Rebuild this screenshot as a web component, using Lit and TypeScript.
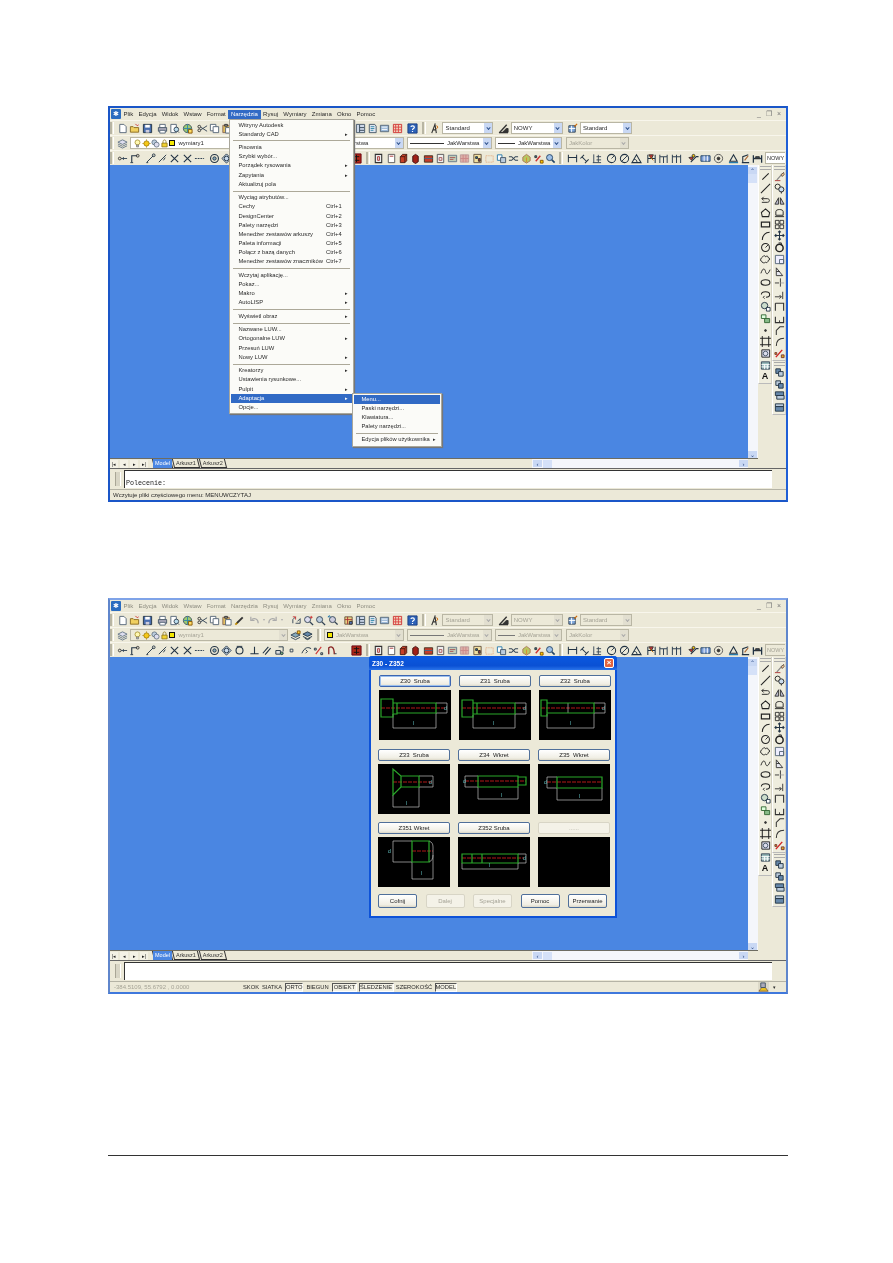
import { LitElement, html, css, svg, nothing, TemplateResult } from "lit";
import { customElement, property } from "lit/decorators.js";

const ICONS: Record<string, TemplateResult> = {
  doc: svg`<path d="M3 1.5h4.5L10 4v6.5H3z" fill="#fff" stroke="#567"/>`,
  folder: svg`<path d="M1.5 10V4h3l1 1h5v5z" fill="#f0d060" stroke="#8a6a20"/><path d="M7 1l2 2 1.500-1" stroke="#c33"/>`,
  save: svg`<path d="M1.500 1.500h9v9h-9z" fill="#4a6fb0" stroke="#234"/><path d="M3.500 2h5v3h-5z" fill="#fff" stroke="none"/><path d="M4 7.500h4v3H4z" fill="#ccd" stroke="none"/>`,
  print: svg`<path d="M3 5V1.500h6V5" fill="#fff" stroke="#567"/><path d="M1.500 5h9v4h-9z" fill="#aab" stroke="#456"/><path d="M3 8h6v3H3z" fill="#fff" stroke="#567"/>`,
  preview: svg`<path d="M2 1.500h6v9H2z" fill="#fff" stroke="#567"/><circle cx="8" cy="7" r="2.500" fill="#bde" stroke="#345"/><path d="m9.500 9 1.500 1.500" stroke="#345"/>`,
  plot: svg`<circle cx="6" cy="6" r="4.500" fill="#9ecb70" stroke="#456"/><path d="M2 6h8M6 1.500v9" stroke="#38a"/><path d="M7 7h4v4H7z" fill="#fd6" stroke="#850"/>`,
  cut: svg`<circle cx="2.500" cy="8" r="1.500"/><circle cx="2.500" cy="4" r="1.500"/><path d="M4 7.500 11 3M4 4.500 11 9" stroke="#345"/>`,
  copy: svg`<path d="M1.500 1.500h6v7h-6z" fill="#fff" stroke="#567"/><path d="M4.500 4h6v6.500h-6z" fill="#fff" stroke="#567"/>`,
  paste: svg`<path d="M2 2.500h7v8H2z" fill="#e4c060" stroke="#865"/><path d="M5 5h6v6H5z" fill="#fff" stroke="#567"/><path d="M4 1.500h3v2H4z" fill="#999"/>`,
  brush: svg`<path d="m3 9 6.500-6.500" stroke="#333" stroke-width="2"/><path d="m1.500 10.500 2-2" stroke="#b80" stroke-width="2"/>`,
  undo: svg`<path d="M10 9C10 4 6 3 3 5M2 2v4h4" stroke="#aaa" stroke-width="1.300"/>`,
  redo: svg`<path d="M2 9c0-5 4-6 7-4M10 2v4H6" stroke="#aaa" stroke-width="1.300"/>`,
  pan: svg`<path d="M2 9V5l3-3M5 9h5V4L7 7" stroke="#345"/><path d="M2 2h3v3" stroke="#c33"/>`,
  zoomrt: svg`<circle cx="5" cy="5" r="3.300" fill="#dde" stroke="#345"/><path d="m7.500 7.500 3.500 3.500" stroke="#345" stroke-width="1.500"/><path d="M9 1v3M7.500 2.500h3" stroke="#c33"/>`,
  zoomwin: svg`<circle cx="5" cy="5" r="3.300" fill="#bcd" stroke="#345"/><path d="m7.500 7.500 3.500 3.500" stroke="#345" stroke-width="1.500"/>`,
  zoomprev: svg`<circle cx="6" cy="5" r="3.300" fill="#ccd" stroke="#345"/><path d="m8.500 7.500 3 3" stroke="#345" stroke-width="1.500"/><path d="M1 2h3M1 2l2-1.500" stroke="#27a"/>`,
  props: svg`<path d="M2 2h8v8H2z" fill="#ead080" stroke="#654"/><path d="M2 5h8M5 2v8" stroke="#a33"/><path d="M7 7h3v3H7z" fill="#57b"/>`,
  dc: svg`<path d="M1.500 1.500h9v9h-9z" fill="#cdd8ea" stroke="#456"/><path d="M5 2v8M5 5h5M5 8h5" stroke="#345"/>`,
  pal: svg`<path d="M2.500 1.500h6l1.500 2v7h-7.500z" fill="#dfe6f0" stroke="#456"/><path d="M4 4h4M4 6h4M4 8h3" stroke="#38a"/>`,
  sheet: svg`<path d="M1.500 2.500h9v7h-9z" fill="#9bb8d8" stroke="#567"/><path d="M3 4.500h6M3 7h6" stroke="#fff"/>`,
  markup: svg`<path d="M1.500 1.500h9v9h-9z" fill="#f0d8c0" stroke="#c33"/><path d="M4 1.500v9M7 1.500v9M1.500 4.500h9M1.500 7.500h9" stroke="#d44"/>`,
  help: svg`<path d="M1 1h10v10H1z" fill="#2d62b8" stroke="#1a3d80"/><path d="M4.200 4.300C4.500 2.600 8 2.700 8 4.500 8 6 6 6 6 7.500M6 8.700v1.200" stroke="#fff" stroke-width="1.300"/>`,
  textstyle: svg`<path d="M3 11 6.500 1.500 8 11M4 7.500h4" stroke="#333" stroke-width="1.200"/><path d="M8 3c2 0 2 3 0 3" stroke="#c60"/>`,
  dimstyle: svg`<path d="M1 10.500h10" stroke="#333" stroke-width="1.500"/><path d="M2 10 9.500 2" stroke="#333" stroke-width="1.500"/><path d="M5 10 9 6h2v4z" fill="#333"/>`,
  tablestyle: svg`<path d="M2 3h7v7H2z" fill="#7fa8dc" stroke="#345"/><path d="M2 6h7M5 3v7" stroke="#fff"/><path d="m8 4 3-3" stroke="#c60" stroke-width="1.300"/>`,
  layers: svg`<path d="m6 2 5 2.500L6 7 1 4.500z" fill="#dde" stroke="#678"/><path d="m1 6.500 5 2.500 5-2.500" stroke="#678"/><path d="m1 8.500 5 2.500 5-2.500" stroke="#678"/>`,
  bulb: svg`<circle cx="6" cy="4.500" r="3.300" fill="#fff8b0" stroke="#a08820"/><path d="M4.700 8h2.600v2.500H4.700z" fill="#bbb" stroke="#777"/>`,
  sun: svg`<circle cx="6" cy="6" r="3.500" fill="#f5c818" stroke="#9a7400"/><path d="M6 .5v2M6 9.500v2M.5 6h2M9.500 6h2" stroke="#b08a10"/>`,
  stack: svg`<circle cx="4.500" cy="4.500" r="3.300" fill="#bcd" stroke="#567"/><circle cx="7.500" cy="7.500" r="3.300" fill="#dde" stroke="#567"/>`,
  lock: svg`<path d="M2.500 5.500h7v5h-7z" fill="#f2d230" stroke="#8a7010"/><path d="M4 5.500V3.500c0-3 4-3 4 0v2" stroke="#8a7010"/>`,
  layerprev: svg`<path d="m6 3 5 2.500L6 8 1 5.500z" fill="#8ab" stroke="#345"/><path d="m1 8 5 2.500L11 8" stroke="#345"/><path d="M8 1h3v3H8z" fill="#fc3" stroke="#850"/>`,
  layerstate: svg`<path d="m6 2 5 2.500L6 7 1 4.500z" fill="#68a" stroke="#234"/><path d="m1 7 5 2.500L11 7" stroke="#234"/><path d="m3 9 3 1.500L9 9" stroke="#234"/>`,
  node: svg`<circle cx="3" cy="6" r="1.500"/><path d="M4.500 6H11" stroke="#345"/><path d="M7 4.500v3" stroke="#345"/>`,
  corner: svg`<path d="M3 10V3h6" stroke="#234" stroke-width="1.200"/><circle cx="9.500" cy="3" r="1.500"/><path d="M1.500 10.500h3" stroke="#234"/>`,
  end: svg`<path d="m2 10 7-7" stroke="#234"/><circle cx="9.500" cy="2.500" r="1.500" stroke="#234"/><path d="M1.500 10.500h2" stroke="#234"/>`,
  mid: svg`<path d="m2 10 8-8" stroke="#234"/><path d="m7 8 2-3" stroke="#234"/>`,
  cross: svg`<path d="m2 2 8 8M10 2 2 10" stroke="#234" stroke-width="1.200"/>`,
  dash: svg`<path d="M1 6h10" stroke="#345" stroke-width="1.200" stroke-dasharray="2 1"/>`,
  center: svg`<circle cx="6" cy="6" r="4.300" stroke="#234" stroke-width="1.200"/><circle cx="6" cy="6" r="1.800" fill="#8ab" stroke="#234"/>`,
  quad: svg`<path d="m6 1 5 5-5 5-5-5z" fill="#cde" stroke="#234"/><circle cx="6" cy="6" r="2.500" stroke="#234"/>`,
  tan: svg`<circle cx="6" cy="6" r="3.800" stroke="#234" stroke-width="1.200"/><path d="M3 1.500h6" stroke="#234"/>`,
  perp: svg`<path d="M1.500 9.500h9M6 2v7.500" stroke="#234" stroke-width="1.200"/>`,
  par: svg`<path d="m2 9 6-7M4.500 10.500l6-7" stroke="#234" stroke-width="1.200"/>`,
  insert: svg`<path d="M2 6h5v4H2z" fill="#ddd" stroke="#234"/><path d="M5 2h5v5" stroke="#234"/><circle cx="8.500" cy="9" r="1.500" fill="#7a7" stroke="#234"/>`,
  pt: svg`<path d="M4.500 4.500h3v3h-3z" stroke="#345"/>`,
  near: svg`<path d="M1 9C4 2 8 2 11 4" stroke="#234"/><path d="m5 5 2 2-2 2" stroke="#234"/>`,
  osnapr: svg`<path d="m3 10 6-8" stroke="#c33" stroke-width="1.200"/><path d="M1.500 3.500h2v2h-2zM8.500 8.500h2v2h-2z" stroke="#234"/>`,
  osnaps: svg`<path d="M3 10V3c3-2 6-1 6 7" stroke="#822" stroke-width="1.400"/><path d="M9.500 9.500h2" stroke="#234"/>`,
  redbox: svg`<path d="M1 1h10v10H1z" fill="#b02818" stroke="#601"/><path d="M3 4h6M6 2v8M3 8h6" stroke="#111"/>`,
  ucs: svg`<path d="M2.500 1.500h7v9h-7z" fill="#eee" stroke="#333" stroke-width="1.200"/><path d="M5 4h2v4H5z" stroke="#a33"/>`,
  ucs2: svg`<path d="M2.500 1.500h7v9h-7z" fill="#fff" stroke="#555"/><path d="M4 3.500h4" stroke="#a33"/>`,
  solid: svg`<path d="M2.500 4 5 1.500h4.500v7L7.500 10.500H2.500z" fill="#c64028" stroke="#4a1a10"/><path d="M2.500 4h5v6.500M7.500 4l2-2.500" stroke="#4a1a10"/>`,
  solid2: svg`<path d="M3 3.500 6 1.500l3 2v6l-3 2-3-2z" fill="#a02018" stroke="#401010"/>`,
  solid3: svg`<path d="M1.500 3h9v7h-9z" fill="#c43c2c" stroke="#432"/><path d="M1.500 6h9" stroke="#468"/>`,
  frame: svg`<path d="M2.500 1.500h7v9h-7z" fill="#eee" stroke="#555"/><path d="M4.500 5h3v3h-3z" stroke="#a55"/>`,
  img: svg`<path d="M1.500 2.500h9v7h-9z" fill="#c0cdb8" stroke="#678"/><path d="M3 5h6M3 7h4" stroke="#a55"/>`,
  pink: svg`<path d="M1.500 2h9v8h-9z" fill="#ddb0a8" stroke="#b99"/><path d="M4.500 2v8M7.500 2v8M1.500 6h9" stroke="#c88"/>`,
  multi: svg`<path d="M2 1.500h8v9H2z" fill="#f2e0a0" stroke="#654"/><path d="M4 4h2v2H4z" fill="#27a"/><path d="M7 6h2v3H7z" fill="#a33"/>`,
  dotted: svg`<path d="M2 3h8v7H2z" stroke="#e0a070" stroke-dasharray="1 1"/>`,
  bluedoc: svg`<path d="M1.500 2h5v6h-5z" fill="#fff" stroke="#27a"/><path d="M5 5h5.500v5.500H5z" fill="#bcd" stroke="#456"/>`,
  scissor: svg`<path d="M1 4h3l2 2 2-2h3M1 8h3l2-2 2 2h3" stroke="#345" stroke-width="1.100"/>`,
  wheel: svg`<path d="m6 1.500 4 3v4l-4 2.500-4-2.500v-4z" fill="#b8c860" stroke="#a75"/><path d="M6 5v5" stroke="#d83"/>`,
  pencil: svg`<path d="m3 9 5-6" stroke="#c33" stroke-width="1.500"/><path d="M8 8h3v3H8z" fill="#fc0" stroke="#850"/><path d="M2 3h2v2H2z" fill="#38a"/>`,
  locate: svg`<circle cx="5" cy="5" r="3.300" fill="#9ec0e8" stroke="#246"/><path d="m7.500 7.500 3 3" stroke="#246" stroke-width="1.800"/>`,
  dimh: svg`<path d="M1.500 2v8M10.500 2v8M1.500 5h9" stroke="#234" stroke-width="1.100"/>`,
  dima: svg`<path d="m1.500 6 4-4M6.500 11l4-4M3 4l5 5" stroke="#234" stroke-width="1.100"/>`,
  dimo: svg`<path d="M2 10.500h9M3 1.500v9M6 4h5M6 7.500h5M8 2v8" stroke="#345"/>`,
  dimr: svg`<circle cx="6" cy="6" r="4.500" stroke="#234" stroke-width="1.100"/><path d="m6 6 3-3" stroke="#234"/>`,
  dimd: svg`<circle cx="6" cy="6" r="4.500" stroke="#234" stroke-width="1.100"/><path d="m3 9 6-6" stroke="#234"/>`,
  dimang: svg`<path d="M1 10.500h10L6 2z" stroke="#234" stroke-width="1.100"/><path d="M3.500 7c2 0 3 1 3 3" stroke="#234"/>`,
  dimq: svg`<path d="M2 2v9M10 2v9M2 6h8" stroke="#234" stroke-width="1.100"/><path d="M3 2h5l-2 4z" fill="#c33"/><path d="m4 4 4 4" stroke="#b60"/>`,
  dimb: svg`<path d="M2 2v9M10 2v9M2 4h8M6 4v7" stroke="#345" stroke-width="1.100"/>`,
  dimc: svg`<path d="M1.500 2v9M6 2v9M10.500 2v9M1.500 4h9" stroke="#345" stroke-width="1.100"/>`,
  leader: svg`<path d="m3 10 6-6h2.500" stroke="#234" stroke-width="1.200"/><path d="m1 5 3 3 2-4z" fill="#c33"/><circle cx="6" cy="3" r="1.500" fill="#fc0"/>`,
  tol: svg`<path d="M1 3h10v6H1z" fill="#7fa0d8" stroke="#246"/><path d="M4.500 3v6M8 3v6" stroke="#fff"/>`,
  cmark: svg`<circle cx="6" cy="6" r="4.500" stroke="#555"/><circle cx="6" cy="6" r="1.500" fill="#333"/>`,
  dedit: svg`<path d="m6 2 4 7H2z" stroke="#234" stroke-width="1.200"/><path d="M1 10.500h10" stroke="#27a" stroke-width="1.300"/>`,
  dedit2: svg`<path d="M2 10.500h8M3 10V4l6-2" stroke="#234" stroke-width="1.200"/><path d="m9 3-4 5" stroke="#a63" stroke-width="1.300"/>`,
  dupd: svg`<path d="M1.500 2.500v8M10.500 2.500v8M1.500 6h9" stroke="#234" stroke-width="1.400"/><path d="M4 4h4v2H4z" fill="#345"/>`,
  line: svg`<path d="m2.500 9.500 7-7" stroke="#222" stroke-width="1.100"/>`,
  xline: svg`<path d="m1 11 10-10" stroke="#222" stroke-width="1.100"/>`,
  pline: svg`<path d="M2 4h6c3 0 3 4 0 4H2" stroke="#222"/><path d="m4 2-2 2 2 2" stroke="#222"/>`,
  polygon: svg`<path d="m6 2 4.500 4-1 4.500h-7L1.500 6z" stroke="#222" stroke-width="1.100"/>`,
  rect: svg`<path d="M1.500 3.500h9v5h-9z" stroke="#222" stroke-width="1.300"/>`,
  arc: svg`<path d="M2.500 11C2.500 6 6 2.500 10.500 2.500" stroke="#222" stroke-width="1.100"/>`,
  circle: svg`<circle cx="6" cy="6" r="4.300" stroke="#222" stroke-width="1.100"/><path d="m6 6 3-3" stroke="#222"/>`,
  cloud: svg`<path d="M3 3c1-2 3-1 3 0 1-1 3-1 3 1 2 0 2 3 0 3 0 2-2 3-3 2-1 1-4 1-4-1-2 0-2-3 1-5z" stroke="#222"/>`,
  spline: svg`<path d="M1 8c2-6 4-6 5-2s3 3 5-2" stroke="#222"/>`,
  ellipse: svg`<ellipse cx="6" cy="6" rx="4.800" ry="3" stroke="#222" stroke-width="1.200"/>`,
  earc: svg`<path d="M1.500 6c0-4 9-4 9 0 0 2-2 3-4 3" stroke="#222" stroke-width="1.100"/><path d="M5 7.500 3.500 9l1.500 1.500" stroke="#222"/>`,
  block: svg`<circle cx="5" cy="5" r="3.500" fill="#cdc" stroke="#234"/><path d="M7 7h4v4H7z" fill="#fff" stroke="#234"/>`,
  mkblock: svg`<path d="M1.500 2h5v4h-5z" fill="#dfd" stroke="#363"/><path d="M5 6h5.500v4.500H5z" fill="#8b8" stroke="#363"/>`,
  dot: svg`<circle cx="6" cy="6" r="1" fill="#333"/>`,
  hatch: svg`<path d="M2.500 2.500h7v7h-7z" stroke="#222" stroke-width="1.100"/><path d="M0 2.500h2.500M9.500 2.500H12M0 9.500h2.500M9.500 9.500H12M2.500 0v2.500M9.500 0v2.500M2.500 9.500V12M9.500 9.500V12" stroke="#222"/>`,
  region: svg`<path d="M2 2h8.500v8H2z" fill="#dde" stroke="#222"/><circle cx="6" cy="6" r="2.500" stroke="#456"/>`,
  table: svg`<path d="M1.500 2h9v8h-9z" fill="#9bb" stroke="#345"/><path d="M1.500 5h9M1.500 7.500h9M5 5v5M8 5v5" stroke="#fff"/>`,
  erase: svg`<path d="m3 10 6-7" stroke="#888" stroke-width="1.300"/><path d="M8 4 10.500 1.500 11 4l-2 2z" fill="#f0c8a0" stroke="#654"/><path d="M1 10.500h6" stroke="#a33"/>`,
  copyobj: svg`<circle cx="4" cy="4" r="2.800" stroke="#222"/><circle cx="8" cy="7" r="2.800" fill="#cde" stroke="#222"/><path d="M8 9.500v2" stroke="#222"/>`,
  mirror: svg`<path d="M1 10 5 3v7zM11 10 7 3v7z" fill="#bbc" stroke="#333"/>`,
  offset: svg`<path d="M2 9V5c0-3 8-3 8 0v4z" stroke="#222"/><path d="M1 10.500h10" stroke="#222"/>`,
  array: svg`<path d="M1.500 1.500h4v4h-4zM6.500 1.500h4v4h-4zM1.500 6.500h4v4h-4zM6.500 6.500h4v4h-4z" stroke="#333"/>`,
  move: svg`<path d="M6 1v10M1 6h10M4.500 2.500 6 1l1.500 1.500M4.500 9.500 6 11l1.500-1.500M2.500 4.500 1 6l1.500 1.500M9.500 4.500 11 6 9.500 7.500" stroke="#234" stroke-width="1.100"/>`,
  rotate: svg`<circle cx="6" cy="6.500" r="4" stroke="#222" stroke-width="1.600"/><path d="M5 1h3v3" stroke="#222"/>`,
  scale: svg`<path d="M1.500 1.500h9v9h-9z" fill="#eef" stroke="#567"/><path d="M6 6h4.500v4.500H6z" stroke="#567"/>`,
  stretch: svg`<path d="M2.500 10.500V2l7 8.500z" fill="#e8e8f0" stroke="#333"/><path d="M2.500 6h4" stroke="#333"/>`,
  trim: svg`<path d="M1 6.500h4.500" stroke="#333"/><path d="M7 1.500v9" stroke="#333"/><path d="M7 6.500h4" stroke="#aaa"/>`,
  extend: svg`<path d="M1 8.500h7M9.500 3v8" stroke="#333"/><path d="m6 6.500 2 2-2 2" stroke="#333"/>`,
  brk: svg`<path d="M1.500 2.500h9v8M1.500 2.500v8" stroke="#333" stroke-width="1.200"/>`,
  join: svg`<path d="M1.500 4v6.500h9V4" stroke="#333" stroke-width="1.200"/><path d="M6 10.500V8" stroke="#333"/>`,
  chamfer: svg`<path d="M2.500 11V6l4-4H11" stroke="#333" stroke-width="1.100"/>`,
  fillet: svg`<path d="M2.500 11C2.500 5 5 2.500 11 2.500" stroke="#333" stroke-width="1.100"/>`,
  explode: svg`<path d="m2 10 7-8" stroke="#d02020" stroke-width="1.500"/><path d="M1 5h2v2H1zM8 7.500h3v3H8z" fill="#e0b020" stroke="#733"/>`,
  ord1: svg`<path d="M2 2h5v5H2z" fill="#68a" stroke="#234"/><path d="M5 5h5v5H5z" fill="#bcd" stroke="#234"/>`,
  ord2: svg`<path d="M2 2h5v5H2z" fill="#bcd" stroke="#234"/><path d="M5 5h5v5H5z" fill="#68a" stroke="#234"/>`,
  ord3: svg`<path d="M1.500 2h9v4h-9z" fill="#68a" stroke="#234"/><path d="M3 6h8v4H3z" fill="#bcd" stroke="#234"/>`,
  ord4: svg`<path d="M1.500 2h9v3h-9z" fill="#bcd" stroke="#234"/><path d="M1.500 5h9v5h-9z" fill="#68a" stroke="#234"/>`,
  tray: svg`<path d="M1 10h10L8 6H4z" fill="#e8c020" stroke="#864"/><path d="M3 1h5v5H3z" fill="#aab" stroke="#456"/>`,
};

const icon = (name: string) =>
  html`<svg class="ic" viewBox="0 0 12 12" fill="none" stroke="#333" stroke-width="1">${ICONS[name]}</svg>`;

type Combo = { w: number; text?: string; line?: number; swatch?: boolean; icons?: string[]; dim?: boolean; bare?: boolean };
type Item = string | number | Combo;

const TB1: Item[] = ["grip", "doc", "folder", "save", 3, "print", "preview", "plot", 3, "cut", "copy", "paste", "brush", 3, "undo", "drop", "redo", "drop", 5, "pan", "zoomrt", "zoomwin", "zoomprev", 3, "props", "dc", "pal", "sheet", "markup", 3, "help", 3, "grip", "textstyle", 2, { w: 51, text: "Standard" }, 4, "dimstyle", 1, { w: 52, text: "NOWY" }, 4, "tablestyle", 1, { w: 52, text: "Standard" }];
const TB2: Item[] = ["grip", "layers", 1.7, { w: 158, text: "wymiary1", swatch: true, icons: ["bulb", "sun", "stack", "lock"] }, 1, "layerprev", "layerstate", 3.400, "grip", { w: 80, text: "JakWarstwa", swatch: true }, 3, { w: 85, text: "JakWarstwa", line: 34 }, 3, { w: 67, text: "JakWarstwa", line: 17 }, 4, { w: 63, text: "JakKolor", dim: true }];
const TB3: Item[] = ["grip", "node", "corner", 3, "end", "mid", "cross", "cross", "dash", 3, "center", "quad", "tan", 3, "perp", "par", "insert", "pt", 3, "near", "osnapr", "osnaps", 13, "redbox", 3.700, "grip", "ucs", "ucs2", "solid", "solid2", "solid3", "frame", "img", "pink", "multi", "dotted", "bluedoc", "scissor", "wheel", "pencil", "locate", 2.400, "grip", "dimh", "dima", "dimo", 3, "dimr", "dimd", "dimang", 3, "dimq", "dimb", "dimc", 5, "leader", "tol", "cmark", 3, "dedit", "dedit2", "dupd", 1, { w: 20, text: "NOWY", bare: true }];
const DRAW = ["line", "xline", "pline", "polygon", "rect", "arc", "circle", "cloud", "spline", "ellipse", "earc", "block", "mkblock", "dot", "hatch", "region", "table"];
const MODIFY = ["erase", "copyobj", "mirror", "offset", "array", "move", "rotate", "scale", "stretch", "trim", "extend", "brk", "join", "chamfer", "fillet", "explode"];
const ORDER = ["ord1", "ord2", "ord3", "ord4"];
const MENUS = ["Plik", "Edycja", "Widok", "Wstaw", "Format", "Narzędzia", "Rysuj", "Wymiary", "Zmiana", "Okno", "Pomoc"];
const STATUS = [["SKOK", 16, 0], ["SIATKA", 23, 0], ["ORTO", 18, 1], ["BIEGUN", 26, 0], ["OBIEKT", 25, 1], ["ŚLEDZENIE", 35, 1], ["SZEROKOŚĆ", 38, 0], ["MODEL", 22, 1]] as const;

@customElement("cad-window")
export class CadWindow extends LitElement {
  @property({ type: Boolean }) disabled = false;
  @property() active = "";
  @property() command = "";
  @property() status = "";

  static styles = css`
    :host { display: block; }
    .window {
      position: relative; width: 680px; height: 396px; box-sizing: border-box;
      display: flex; flex-direction: column; overflow: hidden;
      border: 2px solid #1a56c8; border-right-color: #1f5fd6; background: #ece9d8;
      font: 6px "Liberation Sans", Arial, sans-serif; color: #2a2a2a; filter: blur(0.3px);
    }
    .dis { border-top-color: #7fa3e8; border-left-color: #5f86cc; border-right-color: #5f86cc; border-bottom-color: #3f78dc; }
    .menubar { height: 12px; flex: none; display: flex; align-items: center; padding-left: 1px; }
    .logo { width: 10px; height: 10px; background: #2a6cc0; border-radius: 1px; display: flex; align-items: center; justify-content: center; color: #fff; font-size: 7px; }
    .mi { padding: 1.500px 2.600px; }
    .dis .mi { color: #8d8c80; }
    .mi.on { background: #316ac5; color: #fff; }
    .winbtns { margin-left: auto; padding-right: 5px; display: flex; gap: 5px; color: #777; font-size: 7px; }
    .tb { height: 15px; flex: none; display: flex; align-items: center; overflow: hidden; border-top: 1px solid #f8f6ec; box-sizing: border-box; }
    .ic { width: 11px; height: 11px; flex: none; margin: 0 .65px; display: block; }
    .grip { height: 12px; flex: none; box-sizing: border-box; border-left: 2px solid #b8b5a3; border-right: 1px solid #fff; margin: 0 2.500px 0 0; width: 4px; }
    .drop { flex: none; width: 6px; display: flex; justify-content: center; }
    .drop::after { content: ""; border: 1.500px solid transparent; border-top: 2px solid #aaa; border-bottom: 0; }
    .combo { height: 12px; flex: none; box-sizing: border-box; display: flex; align-items: center; background: #fff; border: 1px solid #b9b6a4; padding-left: 2px; overflow: hidden; white-space: nowrap; }
    .combo .label { flex: 1; overflow: hidden; }
    .combo .ic { width: 9px; height: 9px; margin: 0; }
    .combo.bare { padding-left: 1px; font-size: 5.500px; border-right: 0; }
    .swatch { width: 6px; height: 6px; flex: none; background: #f5e800; border: 1px solid #111; box-sizing: border-box; margin-right: 3px; }
    .ltline { height: 1px; background: #333; flex: none; margin-right: 3px; }
    .arrow { width: 8px; height: 10px; flex: none; background: #c9d8f4; display: flex; align-items: center; justify-content: center; }
    .arrow::after { content: ""; width: 2px; height: 2px; border: solid #33558f; border-width: 0 1px 1px 0; transform: rotate(45deg) translate(-.5px, -.5px); }
    .combo.off { background: #ece9d8; color: #a5a396; }
    .combo.off .arrow { background: #e2dfd0; }
    .combo.off .arrow::after { border-color: #aaa; }
    .combo.off .ltline { background: #777; }
    .middle { flex: 1; min-height: 0; display: flex; }
    .left { flex: 1; display: flex; flex-direction: column; min-width: 0; }
    .main { flex: 1; display: flex; min-height: 0; }
    .canvas { flex: 1; background: #4a86e2; }
    .vscroll { width: 10px; flex: none; background: #f4f6fb; display: flex; flex-direction: column; padding-top: 2px; box-sizing: border-box; }
    .sb { width: 9px; height: 7px; flex: none; background: #c9d8f4; color: #2b4a85; display: flex; align-items: center; justify-content: center; font-size: 6px; line-height: 1; }
    .vscroll .thumb { width: 9px; height: 9px; background: #d5e1f8; margin-bottom: auto; }
    .tabrow { height: 10px; flex: none; display: flex; align-items: center; border-top: 1px solid #6d6c62; box-sizing: border-box; }
    .navs { display: flex; gap: 2px; width: 43px; flex: none; box-sizing: border-box; }
    .nav { width: 8px; height: 8px; text-align: center; font-size: 5px; line-height: 8px; color: #222; background: #f4f2e6; }
    .tab { position: relative; padding: 0 3px; margin-right: 1px; height: 9px; line-height: 8px; color: #333; font-size: 5.500px; }
    .tab::before { content: ""; position: absolute; inset: 0; border: solid #333; border-width: 0 1px 1px; transform: skewX(14deg); z-index: -1; }
    .tab.on { color: #fff; background: #4a86e2; padding: 0 2px; }
    .tabs { display: flex; flex: 1; position: relative; z-index: 0; }
    .hscroll { width: 216px; height: 9px; flex: none; background: #f4f6fb; display: flex; align-items: center; padding-left: 1px; margin-right: 10px; box-sizing: border-box; }
    .hscroll .thumb { width: 9px; height: 8px; background: #d5e1f8; margin-right: auto; margin-left: 1px; }
    .rightbar { width: 28px; flex: none; display: flex; gap: 0; align-items: flex-start; }
    .vtb { width: 14px; flex: none; display: flex; flex-direction: column; align-items: center; background: #efedde; border-left: 1px solid #fff; border-bottom: 1px solid #bbb; border-right: 1px solid #d5d2c2; box-sizing: border-box; }
    .vgrip { width: 11px; height: 4px; flex: none; box-sizing: border-box; border-top: 1px solid #aaa; border-bottom: 1px solid #aaa; margin: 1px 0; }
    .vtb .ic { margin: .4px 0; }
    .atxt { height: 11.800px; font: bold 9px/11.800px "Liberation Sans", sans-serif; color: #111; }
    .cmd { height: 21px; flex: none; display: flex; align-items: stretch; border-top: 1px solid #666; box-sizing: border-box; padding: 1px 14px 1px 3px; }
    .cmdgrip { width: 4px; margin: 2px 3px 2px 2px; border-left: 1px solid #a9a696; border-right: 1px solid #fff; background: #d8d5c5; }
    .cmdbox { flex: 1; background: #fff; border: 1px solid #333; border-width: 1px 0 0 1px; display: flex; align-items: flex-end; padding-left: 1px; font: 6.700px/9px "Liberation Mono", monospace; color: #222; }
    .status { height: 11px; flex: none; display: flex; align-items: center; border-top: 1px solid #b5b3a5; box-sizing: border-box; padding-left: 3px; white-space: nowrap; }
    .coords { width: 129px; flex: none; color: #a5a396; padding-left: 1px; }
    .st { flex: none; text-align: center; font-size: 5.800px; margin-right: 1.500px; box-sizing: border-box; }
    .st.down { border: 1px solid #777; border-color: #555 #fff #fff #555; line-height: 7px; background: #f4f2e6; }
    .tray { margin-left: auto; display: flex; align-items: center; padding-right: 10px; gap: 3px; }
    .tray .ic { background: #dcd9c8; }
    .tray span { font-size: 5px; }
  `;

  private renderItem(it: Item) {
    if (typeof it === "number") return html`<div style="width:${it}px;flex:none"></div>`;
    if (it === "grip") return html`<div class="grip"></div>`;
    if (it === "drop") return html`<div class="drop"></div>`;
    if (typeof it === "string") return icon(it);
    const off = this.disabled || it.dim;
    return html`<div class="combo ${off ? "off" : ""} ${it.bare ? "bare" : ""}" style="width:${it.w}px">
      ${it.icons ? it.icons.map(icon) : nothing}
      ${it.swatch ? html`<div class="swatch"></div>` : nothing}
      ${it.line ? html`<div class="ltline" style="width:${it.line}px"></div>` : nothing}
      <span class="label">${it.text}</span>
      ${it.bare ? nothing : html`<div class="arrow"></div>`}
    </div>`;
  }

  private statusRow() {
    if (!this.disabled) return html`${this.status}`;
    return html`<div class="coords">-384.5109, 55.6792 , 0.0000</div>
      ${STATUS.map(([t, w, d]) => html`<div class="st ${d ? "down" : ""}" style="width:${w}px">${t}</div>`)}
      <div class="tray">${icon("tray")}<span>▾</span></div>`;
  }

  render() {
    return html`<div class="window ${this.disabled ? "dis" : ""}">
      <div class="menubar">
        <div class="logo">✱</div>
        ${MENUS.map((m) => html`<div class="mi ${m === this.active ? "on" : ""}">${m}</div>`)}
        <div class="winbtns"><span>_</span><span>❐</span><span>×</span></div>
      </div>
      <div class="tb">${TB1.map((i) => this.renderItem(i))}</div>
      <div class="tb">${TB2.map((i) => this.renderItem(i))}</div>
      <div class="tb">${TB3.map((i) => this.renderItem(i))}</div>
      <div class="middle">
        <div class="left">
          <div class="main">
            <div class="canvas"></div>
            <div class="vscroll">
              <div class="sb">⌃</div><div class="thumb"></div><div class="sb">⌄</div>
            </div>
          </div>
          <div class="tabrow">
            <div class="navs"><div class="nav">|◂</div><div class="nav">◂</div><div class="nav">▸</div><div class="nav">▸|</div></div>
            <div class="tabs">
              <div class="tab on">Model</div><div class="tab">Arkusz1</div><div class="tab">Arkusz2</div>
            </div>
            <div class="hscroll"><div class="sb">‹</div><div class="thumb"></div><div class="sb">›</div></div>
          </div>
        </div>
        <div class="rightbar">
          <div class="vtb"><div class="vgrip"></div>${DRAW.map(icon)}<div class="atxt">A</div></div>
          <div>
            <div class="vtb"><div class="vgrip"></div>${MODIFY.map(icon)}</div>
            <div class="vtb"><div class="vgrip"></div>${ORDER.map(icon)}</div>
          </div>
        </div>
      </div>
      <div class="cmd"><div class="cmdgrip"></div><div class="cmdbox">${this.command}</div></div>
      <div class="status">${this.statusRow()}</div>
      <slot></slot>
    </div>`;
  }
}

type Entry = { t?: string; k?: string; sub?: boolean; hl?: boolean };
const SEP: Entry = {};

const TOOLS: Entry[] = [
  { t: "Witryny Autodesk" }, { t: "Standardy CAD", sub: true }, SEP,
  { t: "Pisownia" }, { t: "Szybki wybór..." }, { t: "Porządek rysowania", sub: true }, { t: "Zapytania", sub: true }, { t: "Aktualizuj pola" }, SEP,
  { t: "Wyciąg atrybutów..." }, { t: "Cechy", k: "Ctrl+1" }, { t: "DesignCenter", k: "Ctrl+2" }, { t: "Palety narzędzi", k: "Ctrl+3" },
  { t: "Menedżer zestawów arkuszy", k: "Ctrl+4" }, { t: "Paleta informacji", k: "Ctrl+5" }, { t: "Połącz z bazą danych", k: "Ctrl+6" }, { t: "Menedżer zestawów znaczników", k: "Ctrl+7" }, SEP,
  { t: "Wczytaj aplikację..." }, { t: "Pokaz..." }, { t: "Makro", sub: true }, { t: "AutoLISP", sub: true }, SEP,
  { t: "Wyświetl obraz", sub: true }, SEP,
  { t: "Nazwane LUW..." }, { t: "Ortogonalne LUW", sub: true }, { t: "Przesuń LUW" }, { t: "Nowy LUW", sub: true }, SEP,
  { t: "Kreatorzy", sub: true }, { t: "Ustawienia rysunkowe..." }, { t: "Pulpit", sub: true }, { t: "Adaptacja", sub: true, hl: true }, { t: "Opcje..." },
];
const ADAPT: Entry[] = [
  { t: "Menu...", hl: true }, { t: "Paski narzędzi..." }, { t: "Klawiatura..." }, { t: "Palety narzędzi..." }, SEP, { t: "Edycja plików użytkownika", sub: true },
];

@customElement("cad-menu")
export class CadMenu extends LitElement {
  @property({ attribute: false }) items: Entry[] = [];

  static styles = css`
    :host { display: block; }
    .menu { background: #fbfbf8; border: 1px solid #a9a79b; box-shadow: 1px 1px 1px #777; padding: .5px 1px 1px; font: 5.800px "Liberation Sans", Arial, sans-serif; color: #2a2a2a; }
    .item { height: 9.100px; line-height: 9.100px; display: flex; padding-left: 7.500px; padding-right: 3px; white-space: nowrap; position: relative; }
    .item.hl { background: #316ac5; color: #fff; }
    .label { flex: 1; }
    .key { width: 18px; flex: none; }
    .arr { width: 5px; flex: none; font-size: 5px; text-align: center; }
    .sep { height: 1px; background: #aca899; margin: 1.800px 2px; }
  `;

  render() {
    return html`<div class="menu">
      ${this.items.map((e) =>
        e.t
          ? html`<div class="item ${e.hl ? "hl" : ""}">
              <span class="label">${e.t}</span>
              ${e.k ? html`<span class="key">${e.k}</span>` : nothing}
              <span class="arr">${e.sub ? "▸" : ""}</span>
            </div>`
          : html`<div class="sep"></div>`
      )}
    </div>`;
  }
}

type Thumb = { label: string; off?: boolean; green?: string; white?: string; red?: [number, number, number]; d?: [number, number]; l?: [number, number] };

const ROWS: Thumb[][] = [
  [
    { label: "Z30  Sruba", green: "M2 9h12v18H2z M14 13h4v11h-4 M18 13h39v10H18z", white: "M57 13h11M57 23h11M68 13v10M14 24v14M57 23v15M14 38h43", red: [2, 68, 18], d: [65, 18], l: [34, 35] },
    { label: "Z31  Sruba", green: "M3 10h11v17H3z M14 13h4v11h-4 M18 13h38v11H18z", white: "M56 13h11M56 24h11M67 13v11M14 25v13M56 24v14M14 38h42", red: [3, 67, 18], d: [64, 18], l: [34, 35] },
    { label: "Z32  Sruba", green: "M2 10h6v16H2z M8 13h47v10H8z", white: "M29 13v10M55 13h11M55 23h11M66 13v10M8 24v14M55 23v15M8 38h47", red: [2, 66, 18], d: [63, 18], l: [31, 35] },
  ],
  [
    { label: "Z33  Sruba", green: "M15 5v26l8-8V12z M23 12h18v11H23z", white: "M41 12h14M41 23h14M55 12v11M15 31v12M41 23v20M15 43h26", red: [15, 55, 18], d: [51, 18], l: [28, 41] },
    { label: "Z34  Wkret", green: "M20 12h40v11H20z M60 13h8v8h-8", white: "M20 12H7M20 23H7M7 12v11M20 23v12M60 23v12M20 35h40", red: [7, 68, 17], d: [5, 17], l: [43, 33] },
    { label: "Z35  Wkret", green: "M19 13h45v11H19z", white: "M19 13H9M19 24H9M9 13v11M19 24v12M64 24v12M19 36h45", red: [9, 64, 18], d: [6, 18], l: [41, 34] },
  ],
  [
    { label: "Z351 Wkret", green: "M34 4h17v21H34z", white: "M34 4H15M34 25H15M15 4v21M51 4c3 1 4 3 4 6v8c0 3-1 6-4 7M34 25v17M55 18v24M34 42h21", red: [34, 55, 14], d: [10, 14], l: [43, 38] },
    { label: "Z352 Sruba", green: "M4 17h56v9H4z M14 17v9 M24 17v9", white: "M60 17h8M60 26h8M68 17v9M4 26v6M60 26v6M4 32h56", red: [4, 66, 21], d: [65, 21], l: [31, 30] },
    { label: "......", off: true },
  ],
];

@customElement("cad-dialog")
export class CadDialog extends LitElement {
  static styles = css`
    :host { display: block; }
    .dlg { border: 2px solid #0d52d8; border-top: 0; border-radius: 3px 3px 0 0; background: #ece9d8; font: 6px "Liberation Sans", Arial, sans-serif; color: #222; box-sizing: border-box; height: 262px; width: 248px; }
    .title { height: 14px; margin: 0 -2px; display: flex; align-items: center; justify-content: space-between; padding: 0 3px; background: linear-gradient(#0a58e0, #0a50d4 70%, #2a74ea); color: #fff; font: bold 6.500px "Liberation Sans", sans-serif; border-radius: 3px 3px 0 0; }
    .close { width: 10px; height: 10px; background: #e2643f; border: 1px solid #fff; box-sizing: border-box; border-radius: 2px; color: #fff; font: bold 8px/8px "Liberation Sans", sans-serif; text-align: center; }
    .body { padding: 5px 7px 0; display: flex; flex-direction: column; gap: 8.500px; }
    .row { display: flex; gap: 8px; }
    .row.first { padding-left: 1px; }
    .cell { width: 72px; display: flex; flex-direction: column; gap: 3px; }
    .btn { height: 12px; box-sizing: border-box; border: 1px solid #4f6f9a; border-radius: 2px; background: linear-gradient(#fff, #f0eee4 80%, #dcd8c8); line-height: 10px; text-align: center; white-space: pre; }
    .btn.focus { border-color: #3d66b0; box-shadow: inset 0 0 0 1px #9cc0ee; }
    .btn.off { border-color: #d8d5c6; color: #a5a396; background: #f4f2e8; }
    .thumb { display: block; width: 72px; height: 50px; background: #000; }
    .actions { display: flex; justify-content: space-between; padding: 7px 1px 0 0; margin-top: -8.500px; }
    .actions .btn { width: 39px; height: 14px; line-height: 12px; }
  `;

  private thumb(t: Thumb) {
    return html`<svg class="thumb" viewBox="0 0 72 50" fill="none">
      ${t.red ? svg`<path d="M${t.red[0]} ${t.red[2]}H${t.red[1]}" stroke="#b01818" stroke-dasharray="4 1"/>` : nothing}
      ${t.white ? svg`<path d=${t.white} stroke="#bdbdbd" stroke-width=".7"/>` : nothing}
      ${t.green ? svg`<path d=${t.green} stroke="#2aa82a" stroke-width="1.200"/>` : nothing}
      ${t.d ? svg`<text x=${t.d[0]} y=${t.d[1] + 2} fill="#6cc" font-size="5" font-family="Liberation Sans">d</text>` : nothing}
      ${t.l ? svg`<text x=${t.l[0]} y=${t.l[1]} fill="#6cc" font-size="5" font-family="Liberation Sans">l</text>` : nothing}
    </svg>`;
  }

  render() {
    return html`<div class="dlg">
      <div class="title"><span>Z30 - Z352</span><div class="close">×</div></div>
      <div class="body">
        ${ROWS.map((row, r) => html`<div class="row ${r === 0 ? "first" : ""}">
          ${row.map((t, c) => html`<div class="cell">
            <div class="btn ${t.off ? "off" : ""} ${r + c === 0 ? "focus" : ""}">${t.label}</div>
            ${this.thumb(t)}
          </div>`)}
        </div>`)}
        <div class="actions">
          <div class="btn">Cofnij</div>
          <div class="btn off">Dalej</div>
          <div class="btn off">Specjalne</div>
          <div class="btn">Pomoc</div>
          <div class="btn">Przerwanie</div>
        </div>
      </div>
    </div>`;
  }
}

@customElement("app-root")
export class AppRoot extends LitElement {
  static styles = css`
    :host { display: block; background: #fff; height: 1263px; overflow: hidden; }
    .page { padding: 106px 0 0 108px; display: flex; flex-direction: column; }
    .second { margin-top: 96px; }
    .rule { width: 680px; height: 1px; background: #333; margin-top: 161px; }
    .tools { position: absolute; left: 119px; top: 11px; width: 125px; }
    .adapt { position: absolute; left: 242px; top: 285px; width: 90px; }
    .dialog { position: absolute; left: 259px; top: 56px; }
  `;

  render() {
    return html`<div class="page">
      <cad-window active="Narzędzia" command="Polecenie:" status="Wczytuje pliki częściowego menu:  MENUWCZYTAJ">
        <cad-menu class="tools" .items=${TOOLS}></cad-menu>
        <cad-menu class="adapt" .items=${ADAPT}></cad-menu>
      </cad-window>
      <cad-window class="second" disabled>
        <cad-dialog class="dialog"></cad-dialog>
      </cad-window>
      <div class="rule"></div>
    </div>`;
  }
}
